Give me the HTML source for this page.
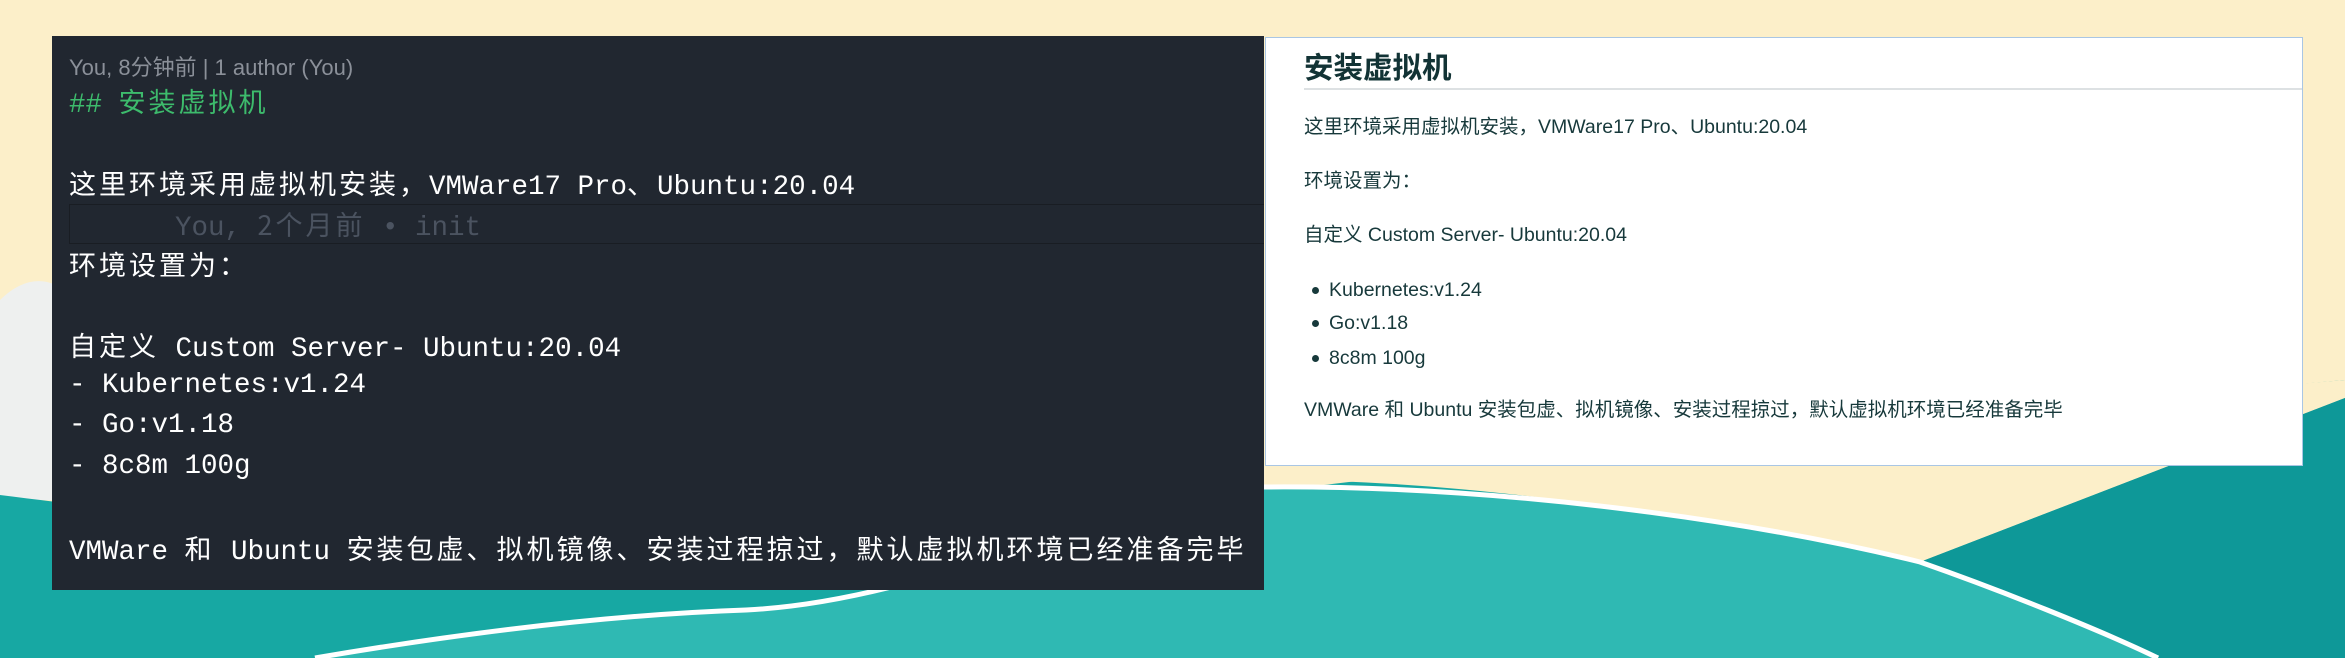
<!DOCTYPE html>
<html><head><meta charset="utf-8"><style>
html,body{margin:0;padding:0;width:2345px;height:658px;overflow:hidden;background:#fcefc9;}
.bg{position:absolute;left:0;top:0;}
.ed{position:absolute;left:52px;top:36px;width:1212px;height:554px;background:#212730;font-family:"Liberation Mono","Noto Sans CJK SC",monospace;font-size:27.5px;color:#fff;}
.ln{position:absolute;left:17px;white-space:pre;line-height:40px;height:40px;}
.c{font-family:"Noto Sans CJK SC",sans-serif;font-size:27px;letter-spacing:3px;}
.auth{position:absolute;left:17px;top:14px;font-family:"Liberation Sans","Noto Sans CJK SC",sans-serif;font-size:22px;color:#8b9099;white-space:pre;}
.ghostbox{position:absolute;left:17px;right:0;top:168px;height:38px;border:1px solid #191d23;border-right:none;background:#212730;}
.pv{position:absolute;left:1265px;top:37px;width:1036px;height:427px;background:#fff;border:1px solid #a9c6e4;font-family:"Liberation Sans","Noto Sans CJK SC",sans-serif;color:#17393b;font-size:19.5px;}
.pv h2{position:absolute;left:38px;top:7px;margin:0;font-size:29.5px;font-weight:bold;color:#123335;}
.pv .hr{position:absolute;left:38px;right:0;top:50px;height:2px;background:#dde1e3;}
.pv p{position:absolute;left:38px;margin:0;white-space:pre;line-height:26px;}
.pv .b{position:absolute;left:46px;width:7px;height:7px;border-radius:50%;background:#17393b;}
</style></head><body>
<svg class="bg" width="2345" height="658" viewBox="0 0 2345 658">
<rect width="2345" height="658" fill="#fcefc9"/>
<path d="M0 300 C30 270 60 280 70 300 L70 500 L0 500 Z" fill="#eef0ef"/>
<path d="M0 495 C200 520 500 560 900 540 C1400 470 1900 420 2345 380 L2345 658 L0 658 Z" fill="#17a8a3"/>
<path d="M1264 470 L1264 480 C1500 480 1700 520 1920 562 L2345 398 L2345 380 Z" fill="#fcefc9"/>
<path d="M1920 562 L2345 398 L2345 658 L2158 658 Z" fill="#0e9898"/>
<path d="M315 658 C450 635 600 615 746 610 C950 600 1150 480 1264 487 C1500 485 1750 520 1920 562 C2000 590 2100 630 2158 658 Z" fill="#2fb9b3"/>
<path d="M315 658 C450 635 600 615 746 610 C950 600 1150 480 1264 487 C1500 485 1750 520 1920 562 C2000 590 2100 630 2158 658" fill="none" stroke="#fff" stroke-width="5"/>
</svg>
<div class="ed">
<div class="auth">You, 8分钟前 | 1 author (You)</div>
<div class="ghostbox"></div>
<div class="ln" style="top:45px;color:#3dbb6c">## <span class="c">安装虚拟机</span></div>
<div class="ln" style="top:127px"><span class="c">这里环境采用虚拟机安装，</span>VMWare17 Pro<span class="c">、</span>Ubuntu:20.04</div>
<div class="ln" style="top:168px;left:24px;color:#4b5360">      You, <span class="c">2个月前</span> • init</div>
<div class="ln" style="top:208px"><span class="c">环境设置为：</span></div>
<div class="ln" style="top:289px"><span class="c">自定义</span> Custom Server- Ubuntu:20.04</div>
<div class="ln" style="top:330px">- Kubernetes:v1.24</div>
<div class="ln" style="top:370px">- Go:v1.18</div>
<div class="ln" style="top:411px">- 8c8m 100g</div>
<div class="ln" style="top:492px">VMWare <span class="c">和</span> Ubuntu <span class="c">安装包虚、拟机镜像、安装过程掠过，默认虚拟机环境已经准备完毕</span></div>
</div>
<div class="pv">
<h2>安装虚拟机</h2>
<div class="hr"></div>
<p style="top:76px">这里环境采用虚拟机安装，VMWare17 Pro、Ubuntu:20.04</p>
<p style="top:130px">环境设置为：</p>
<p style="top:184px">自定义 Custom Server- Ubuntu:20.04</p>
<div class="b" style="top:249px"></div><p style="left:63px;top:239px">Kubernetes:v1.24</p>
<div class="b" style="top:282px"></div><p style="left:63px;top:272px">Go:v1.18</p>
<div class="b" style="top:317px"></div><p style="left:63px;top:307px">8c8m 100g</p>
<p style="top:359px">VMWare 和 Ubuntu 安装包虚、拟机镜像、安装过程掠过，默认虚拟机环境已经准备完毕</p>
</div>
</body></html>
